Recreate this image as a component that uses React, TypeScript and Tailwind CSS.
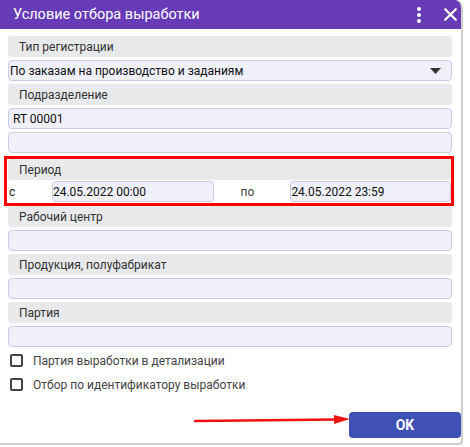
import React from "react";

const Label = ({ children, className = "" }: { children: React.ReactNode; className?: string }) => (
  <div className={"h-[21px] rounded-[3px] bg-[#e8e9eb] pl-[11px] flex items-center text-[12px] text-[#333] " + className}>
    {children}
  </div>
);

const Input = ({ children, className = "" }: { children?: React.ReactNode; className?: string }) => (
  <div
    className={
      "h-[21px] rounded-[4px] bg-[#eff0fa] border border-[#c9cbe6] flex items-center pl-[1px] text-[12px] text-[#111] " +
      className
    }
  >
    {children}
  </div>
);

const Checkbox = ({ label }: { label: string }) => (
  <div className="flex items-center h-[13px]">
    <div className="ml-[2px] w-[13px] h-[13px] border-2 border-[#444] rounded-[2px] bg-white" />
    <span className="ml-[10px] text-[12px] text-[#444]">{label}</span>
  </div>
);

export default function App() {
  return (
    <div className="w-[470px] h-[447px] bg-white" style={{ fontFamily: "Roboto, 'Liberation Sans', sans-serif" }}>
      <div className="relative w-[463px] h-[445px] bg-white border-r-2 border-b-2 border-[#cfcfcf] rounded-tr-[8px] rounded-br-[4px] overflow-hidden flex flex-col">
        <div className="h-[29px] bg-[#673ab7] flex items-center pl-[13px] pr-[4px] text-white text-[14.5px]">
          <span className="flex-1">Условие отбора выработки</span>
          <svg width="6" height="18" viewBox="0 0 6 18" className="mr-[22px]">
            <circle cx="3" cy="3" r="2" fill="white" />
            <circle cx="3" cy="9" r="2" fill="white" />
            <circle cx="3" cy="15" r="2" fill="white" />
          </svg>
          <svg width="13" height="13" viewBox="0 0 13 13">
            <path d="M1.2 1.2 L11.8 11.8 M11.8 1.2 L1.2 11.8" stroke="white" strokeWidth="2.2" strokeLinecap="round" />
          </svg>
        </div>

        <div className="flex flex-col pl-[8px] pr-[9px] pt-[7px] gap-[3px]">
          <Label>Тип регистрации</Label>
          <Input className="justify-between pr-[10px]">
            <span>По заказам на производство и заданиям</span>
            <svg width="11" height="6" viewBox="0 0 11 6">
              <path d="M0 0 L11 0 L5.5 6 Z" fill="#333" />
            </svg>
          </Input>
          <Label>Подразделение</Label>
          <Input>
            <span className="pl-[3px]">RT 00001</span>
          </Input>
          <Input />

          <div className="-ml-[4px] -mr-[2px] -mb-[3px] border-[3px] border-[#ff0000] flex flex-col gap-[1px] pb-[1px] relative z-10">
            <div className="ml-[1px]">
              <Label className="h-[20px]">Период</Label>
            </div>
            <div className="flex items-center h-[21px] text-[12px] text-[#222]">
              <span className="w-[45px] pl-[2px]">с</span>
              <div className="w-[162px] h-[21px] rounded-[4px] bg-[#eff0fa] border border-[#c9cbe6] flex items-center text-[12px] text-[#111]">
                24.05.2022 00:00
              </div>
              <span className="w-[77px] pl-[27px] text-[#444]">по</span>
              <div className="w-[161px] h-[21px] rounded-[4px] bg-[#eff0fa] border border-[#c9cbe6] flex items-center text-[12px] text-[#111]">
                24.05.2022 23:59
              </div>
            </div>
          </div>

          <Label>Рабочий центр</Label>
          <Input />
          <Label>Продукция, полуфабрикат</Label>
          <Input />
          <Label>Партия</Label>
          <Input />

          <div className="flex flex-col gap-[11px] mt-[4px]">
            <Checkbox label="Партия выработки в детализации" />
            <Checkbox label="Отбор по идентификатору выработки" />
          </div>
        </div>

        <div className="flex-1" />
        <div className="flex justify-end items-center pb-[5px] relative">
          <svg width="160" height="12" viewBox="0 0 160 12" className="absolute left-[194px] top-[2px]">
            <path d="M1 7 L142 5.5" stroke="#ee1111" strokeWidth="2.5" strokeLinecap="round" />
            <path d="M140 1 L156 5 L140 10 Z" fill="#ee1111" />
          </svg>
          <button className="w-[112px] h-[26px] rounded-[4px] bg-[#3f51b5] text-white text-[14px] font-bold">
            OK
          </button>
        </div>
      </div>
    </div>
  );
}
